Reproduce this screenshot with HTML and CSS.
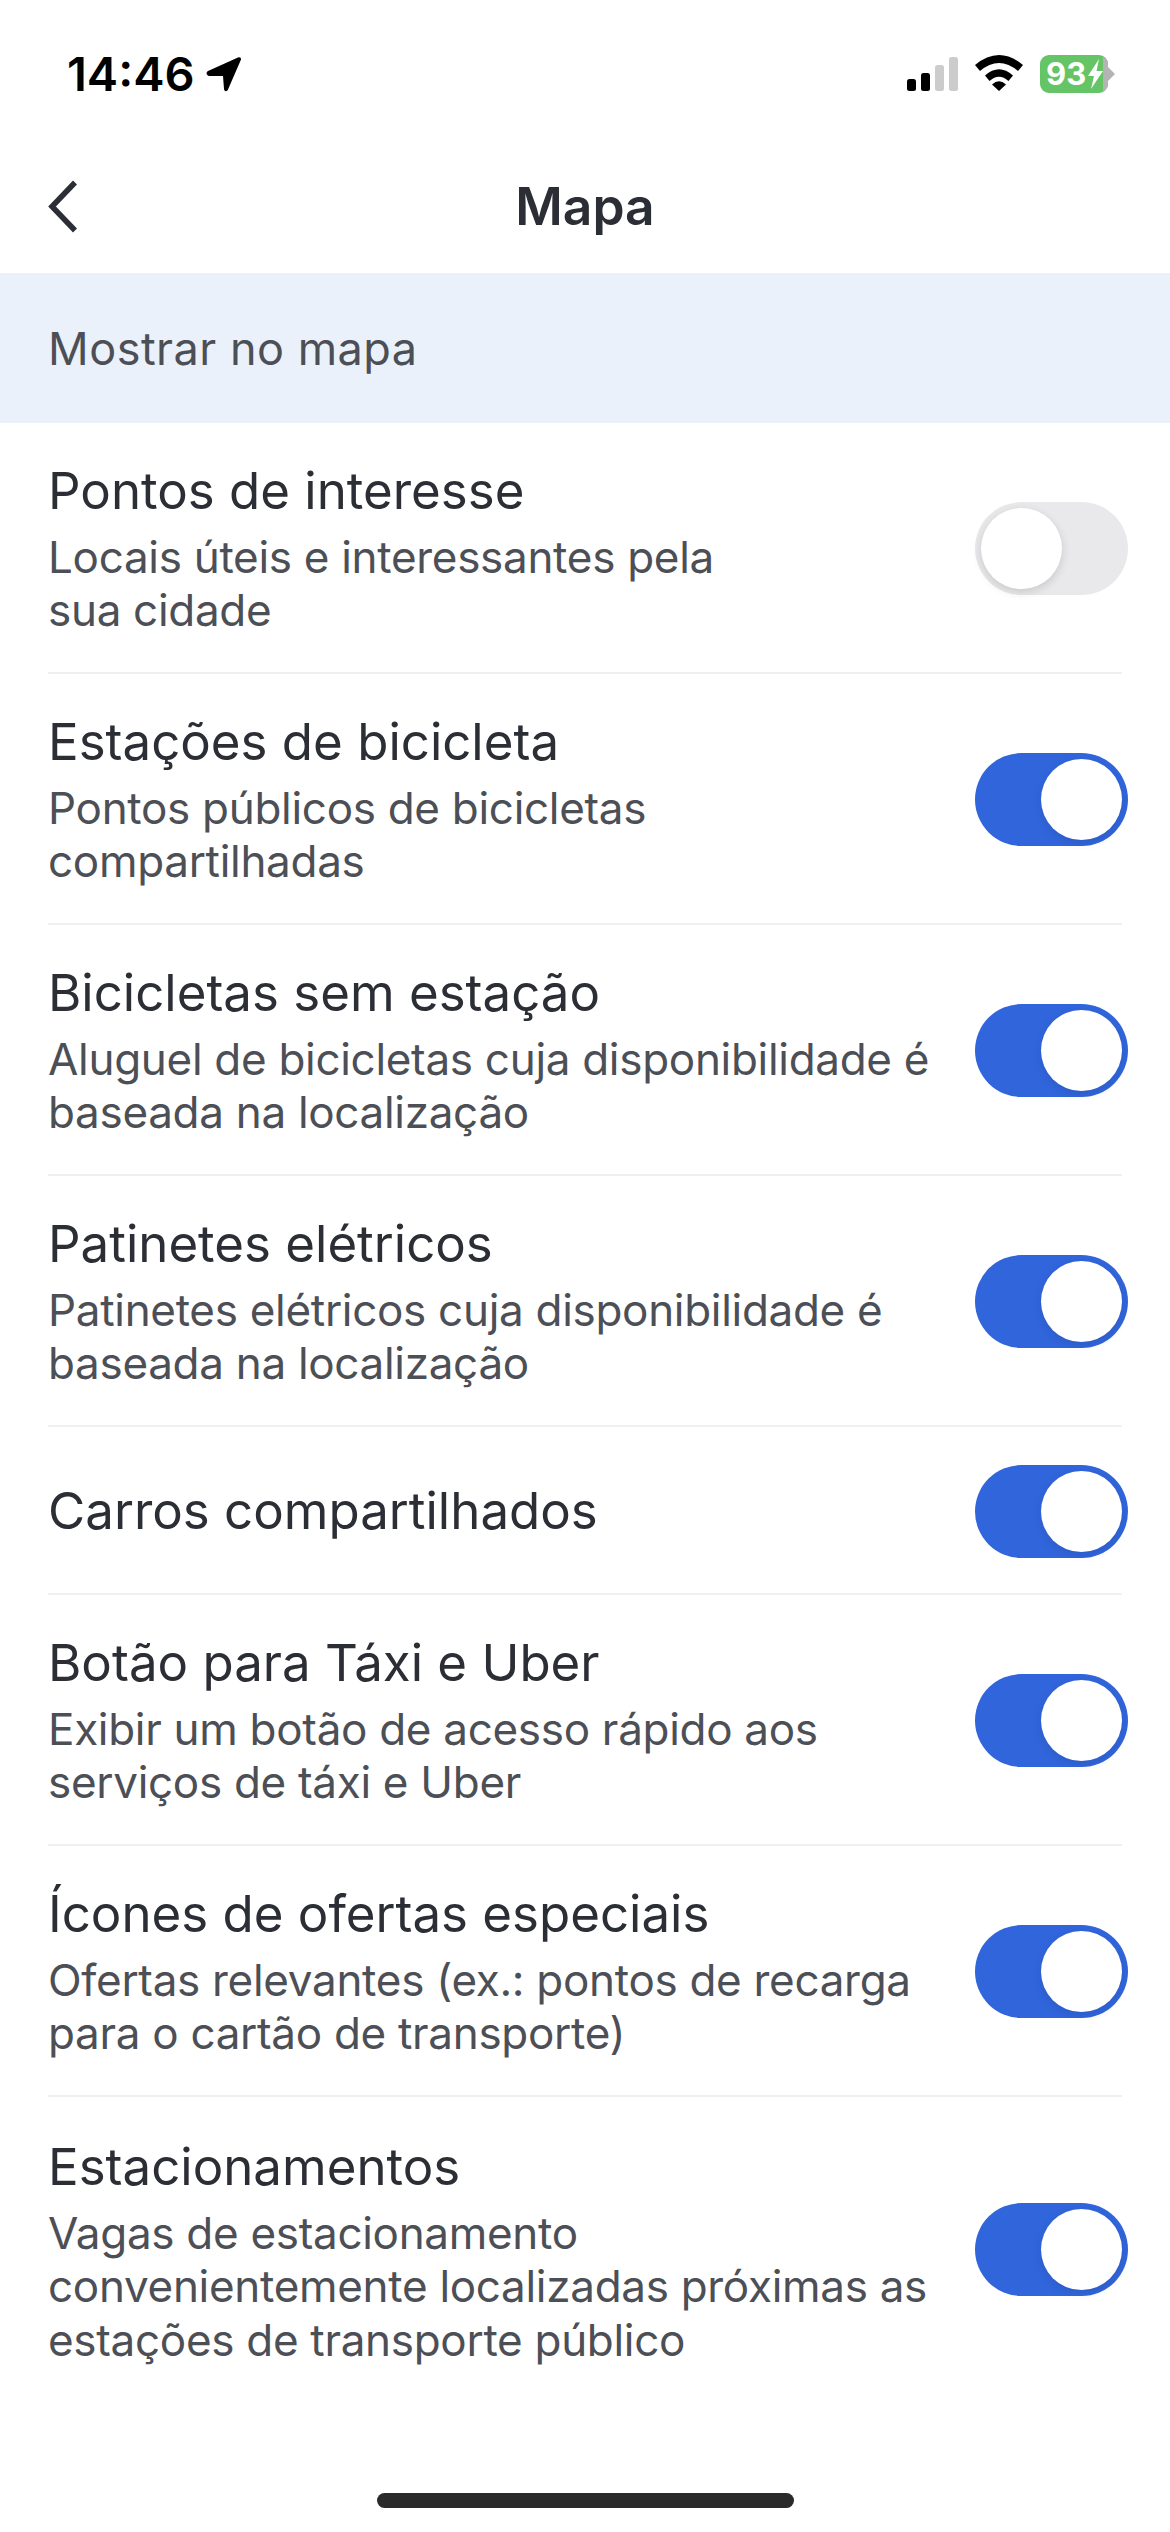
FILE: index.html
```html
<!DOCTYPE html>
<html lang="pt-BR">
<head>
<meta charset="utf-8">
<title>Mapa</title>
<link rel="stylesheet" href="styles.css">
</head>
<body>
<div class="screen">
  <div class="status">
    <div class="status-left">
      <span class="time">14:46</span>
      <svg class="loc" width="36" height="36" viewBox="0 0 36 36"><path d="M2 15 32 1.500c2-.9 3.600.5 2.800 2.500L22 33.500c-1 2.500-3.800 2-4-.5L17 20H3.500C.5 20-.5 16.500 2 15z" fill="#000"/></svg>
    </div>
    <div class="status-right">
      <svg class="signal" width="51" height="34" viewBox="0 0 51 34"><rect x="0" y="22" width="9" height="12" rx="2.500" fill="#000"/><rect x="14" y="16" width="9" height="18" rx="2.500" fill="#000"/><rect x="28" y="8" width="9" height="26" rx="2.500" fill="#ccc"/><rect x="42" y="0" width="9" height="34" rx="2.500" fill="#ccc"/></svg>
      <svg class="wifi" width="48" height="36" viewBox="0 0 48 36"><path d="M0 10Q24-10 48 10L43 16Q24 0 5 16zM10 20.500Q24 8 38 20.500L33.500 26Q24 17.500 14.500 26zM24 36 17 29.500Q24 23 31 29.500z" fill="#000"/></svg>
      <div class="battery">
        <div class="battery-body">
          <span class="battery-num">93</span>
          <svg class="bolt" width="15" height="30" viewBox="0 0 15 30"><path d="M11 0 0 17h6L3 30 15 12H8.500z" fill="#fff"/></svg>
          <span class="battery-end"></span>
        </div>
        <span class="battery-cap"></span>
      </div>
    </div>
  </div>

  <header class="nav">
    <svg class="back" width="30" height="54" viewBox="0 0 30 54"><path d="M27 2.500 4 26.500l23 24" fill="none" stroke="#2c2e35" stroke-width="5.500"/></svg>
    <h1 class="nav-title">Mapa</h1>
  </header>

  <div class="banner">Mostrar no mapa</div>

  <ul class="list">
    <li class="row">
      <div class="text"><div class="name">Pontos de interesse</div><div class="desc">Locais úteis e interessantes pela<br>sua cidade</div></div>
      <span class="toggle off"><span class="knob"></span></span>
    </li>
    <li class="row">
      <div class="text"><div class="name">Estações de bicicleta</div><div class="desc">Pontos públicos de bicicletas<br>compartilhadas</div></div>
      <span class="toggle"><span class="knob"></span></span>
    </li>
    <li class="row">
      <div class="text"><div class="name">Bicicletas sem estação</div><div class="desc">Aluguel de bicicletas cuja disponibilidade é<br>baseada na localização</div></div>
      <span class="toggle"><span class="knob"></span></span>
    </li>
    <li class="row">
      <div class="text"><div class="name">Patinetes elétricos</div><div class="desc">Patinetes elétricos cuja disponibilidade é<br>baseada na localização</div></div>
      <span class="toggle"><span class="knob"></span></span>
    </li>
    <li class="row row-single">
      <div class="text"><div class="name">Carros compartilhados</div></div>
      <span class="toggle"><span class="knob"></span></span>
    </li>
    <li class="row">
      <div class="text"><div class="name">Botão para Táxi e Uber</div><div class="desc">Exibir um botão de acesso rápido aos<br>serviços de táxi e Uber</div></div>
      <span class="toggle"><span class="knob"></span></span>
    </li>
    <li class="row">
      <div class="text"><div class="name">Ícones de ofertas especiais</div><div class="desc">Ofertas relevantes (ex.: pontos de recarga<br>para o cartão de transporte)</div></div>
      <span class="toggle"><span class="knob"></span></span>
    </li>
    <li class="row row-last">
      <div class="text"><div class="name">Estacionamentos</div><div class="desc">Vagas de estacionamento<br>convenientemente localizadas próximas as<br>estações de transporte público</div></div>
      <span class="toggle"><span class="knob"></span></span>
    </li>
  </ul>
  <div class="home-wrap"><span class="home"></span></div>
</div>
</body>
</html>
```

FILE: styles.css
```css
* { box-sizing: border-box; }
html, body { margin: 0; padding: 0; background: #fff; }
body { font-family: Inter, "Liberation Sans", sans-serif; }
.screen { width: 1170px; height: 2532px; display: flex; flex-direction: column; overflow: hidden; }

.status { height: 147px; flex: none; display: flex; justify-content: space-between; align-items: flex-start; padding: 50px 55px 0 67px; }
.status-left { display: flex; align-items: center; gap: 11px; }
.time { font-size: 47px; font-weight: 600; line-height: 48px; color: #000; }
.loc { display: block; }
.status-right { display: flex; align-items: flex-start; gap: 17px; padding-top: 5px; }
.signal { display: block; margin-top: 2px; }
.wifi { display: block; }
.battery { display: flex; align-items: center; }
.battery-body { width: 68px; height: 38px; border-radius: 9px; background: #64c466; display: flex; align-items: center; padding-left: 6px; position: relative; overflow: hidden; }
.battery-num { font-size: 31px; font-weight: 700; color: #fff; line-height: 38px; }
.bolt { display: block; margin-left: 2px; }
.battery-end { position: absolute; top: 0; right: 0; width: 5px; height: 38px; background: #b4b4b4; }
.battery-cap { width: 7px; height: 14px; background: #b4b4b4; clip-path: polygon(0 0, 100% 50%, 0 100%); }

.nav { height: 126px; flex: none; display: flex; align-items: center; justify-content: center; position: relative; padding-bottom: 8px; }
.back { position: absolute; left: 48px; top: 33px; display: block; }
.nav-title { margin: 0; font-size: 51.500px; font-weight: 560; color: #2c2e35; line-height: 60px; }

.banner { height: 150px; flex: none; background: #eaf1fa; color: #4d4f56; font-size: 45px; letter-spacing: .5px; display: flex; align-items: center; padding-left: 48px; }

.list { list-style: none; margin: 0; padding: 0; }
.row { height: 251px; margin: 0 48px; display: flex; justify-content: space-between; align-items: center; border-bottom: 2px solid #f0f0f2; padding-top: 2px; }
.row-single { height: 168px; }
.row-last { height: 303px; border-bottom: 0; }
.row-last .text { margin: 2px 0 0; }
.text { margin-bottom: 2px; }
.row-single .text { margin-bottom: 0; }
.name { font-size: 51px; line-height: 66px; color: #2c2e35; }
.desc { font-size: 44px; letter-spacing: -.3px; line-height: 53.500px; color: #4d4f56; margin-top: 7px; }

.toggle { width: 153px; height: 93px; flex: none; border-radius: 47px; background: #3165dc; display: block; position: relative; margin-right: -6px; }
.knob { position: absolute; top: 6px; right: 6px; width: 81px; height: 81px; border-radius: 50%; background: #fff; box-shadow: 0 3px 10px rgba(0,0,0,.1); }
.toggle.off { background: #e9e9eb; }
.toggle.off .knob { right: auto; left: 6px; box-shadow: 0 3px 10px rgba(0,0,0,.14); }

.home-wrap { flex: 1; display: flex; justify-content: center; align-items: flex-end; padding-bottom: 24px; }
.home { width: 417px; height: 15px; border-radius: 8px; background: #2a2a2a; display: block; }
```
